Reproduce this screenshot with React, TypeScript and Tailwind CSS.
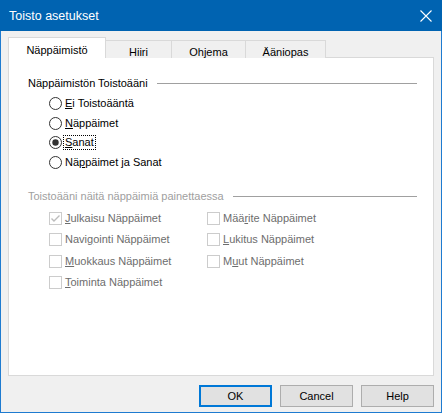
import React from "react";

const U = ({ children }: { children: React.ReactNode }) => <span className="underline underline-offset-[1px]">{children}</span>;

function Radio({ checked, label, focus }: { checked?: boolean; label: React.ReactNode; focus?: boolean }) {
  return (
    <div className="flex h-[19.5px] items-center">
      <svg width="13" height="13" viewBox="0 0 13 13" className="shrink-0">
        <circle cx="6.5" cy="6.5" r="6" fill="#fff" stroke="#333" strokeWidth="1" />
        {checked && <circle cx="6.5" cy="6.5" r="3.2" fill="#333" />}
      </svg>
      <span className={"ml-[2px] px-[1px] leading-[13px] text-black " + (focus ? "outline-1 outline-dotted outline-black" : "")}>{label}</span>
    </div>
  );
}

function Check({ checked, label }: { checked?: boolean; label: React.ReactNode }) {
  return (
    <div className="flex h-[21.3px] items-center">
      <svg width="13" height="13" viewBox="0 0 13 13" className="shrink-0">
        <rect x="0.5" y="0.5" width="12" height="12" fill="#fff" stroke="#cccccc" strokeWidth="1" />
        {checked && <path d="M2.5 6.5 L5 9 L10.5 3.5" fill="none" stroke="#bcbcbc" strokeWidth="1.4" />}
      </svg>
      <span className="ml-[3px] text-[#6d6d6d] leading-[13px]">{label}</span>
    </div>
  );
}

export default function App() {
  return (
    <div className="w-[442px] h-[416px] bg-white font-['Liberation_Sans',sans-serif] text-[11px] select-none">
      <div className="w-[442px] h-[413px] flex flex-col">
        <div className="h-[31px] bg-[#0063b1] flex items-center justify-between pl-[9px] pr-[10px] text-white text-[12.5px]">
          <span className="pt-[1px]">Toisto asetukset</span>
          <svg width="12" height="12" viewBox="0 0 12 12">
            <path d="M0.5 0.5 L11.5 11.5 M11.5 0.5 L0.5 11.5" stroke="#fff" strokeWidth="1.1" />
          </svg>
        </div>
        <div className="flex-1 bg-[#f0f0f0] border-x border-b border-[#1e7bd0] flex flex-col px-[7px]">
          <div className="flex items-end h-[27px] relative z-10">
            <div className="w-[98px] h-[21px] bg-white border border-b-0 border-[#d9d9d9] flex items-start justify-center pt-[4px] text-black">Näppäimistö</div>
            <div className="w-[66px] h-[18px] bg-[#f0f0f0] border border-l-0 border-b-0 border-[#d9d9d9] flex items-start justify-center pt-[3px] text-black">Hiiri</div>
            <div className="w-[74px] h-[18px] bg-[#f0f0f0] border border-l-0 border-b-0 border-[#d9d9d9] flex items-start justify-center pt-[3px] text-black">Ohjema</div>
            <div className="w-[80px] h-[18px] bg-[#f0f0f0] border border-l-0 border-b-0 border-[#d9d9d9] flex items-start justify-center pt-[3px] text-black">Ääniopas</div>
          </div>
          <div className="h-[319px] bg-white border border-[#d9d9d9] -mt-px pl-[19px] pr-[16px] pt-[18px]">
            <div className="flex items-center h-[14px]">
              <span className="text-black">Näppäimistön Toistoääni</span>
              <div className="flex-1 ml-[9px] h-px bg-[#a0a0a0]" />
            </div>
            <div className="mt-[4px] ml-[21px] flex flex-col">
              <Radio label={<><U>E</U>i Toistoääntä</>} />
              <Radio label={<><U>N</U>äppäimet</>} />
              <Radio checked focus label={<><U>S</U>anat</>} />
              <Radio label={<>Nä<U>p</U>päimet ja Sanat</>} />
            </div>
            <div className="flex items-center h-[14px] mt-[17px]">
              <span className="text-[#a0a0a0]">Toistoääni näitä näppäimiä painettaessa</span>
              <div className="flex-1 ml-[9px] h-px bg-[#a0a0a0]" />
            </div>
            <div className="mt-[5px] ml-[21px] grid grid-cols-[158px_1fr]">
              <div className="flex flex-col">
                <Check checked label={<><U>J</U>ulkaisu Näppäimet</>} />
                <Check label={<>Navi<U>g</U>ointi Näppäimet</>} />
                <Check label={<><U>M</U>uokkaus Näppäimet</>} />
                <Check label={<><U>T</U>oiminta Näppäimet</>} />
              </div>
              <div className="flex flex-col">
                <Check label={<>Mää<U>r</U>ite Näppäimet</>} />
                <Check label={<><U>L</U>ukitus Näppäimet</>} />
                <Check label={<>M<U>u</U>ut Näppäimet</>} />
              </div>
            </div>
          </div>
          <div className="flex justify-end gap-[8px] mt-[9px]">
            <button className="w-[73px] h-[22px] bg-[#e1e1e1] border-2 border-[#0078d7] text-black">OK</button>
            <button className="w-[73px] h-[22px] bg-[#e1e1e1] border border-[#adadad] text-black">Cancel</button>
            <button className="w-[73px] h-[22px] bg-[#e1e1e1] border border-[#adadad] text-black">Help</button>
          </div>
        </div>
      </div>
    </div>
  );
}
